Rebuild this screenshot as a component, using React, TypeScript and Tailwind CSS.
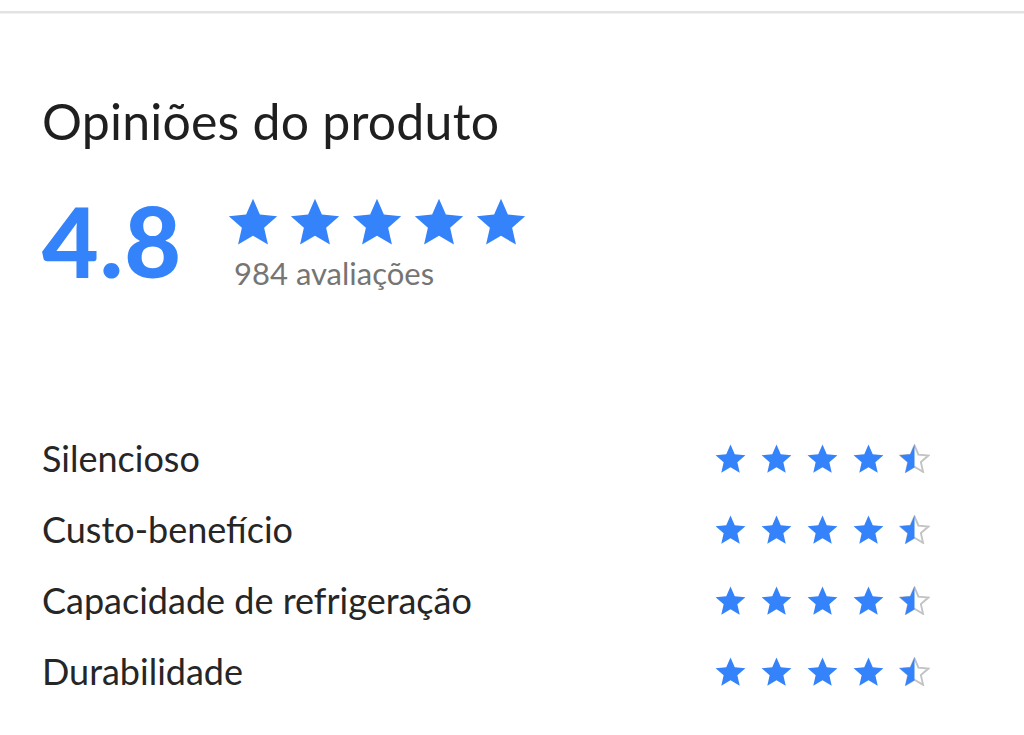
import React from "react";

function starPoints(cx: number, cy: number, R: number, r: number) {
  const pts: string[] = [];
  for (let i = 0; i < 10; i++) {
    const rad = i % 2 === 0 ? R : r;
    const a = (Math.PI / 5) * i - Math.PI / 2;
    pts.push(`${(cx + rad * Math.cos(a)).toFixed(2)},${(cy + rad * Math.sin(a)).toFixed(2)}`);
  }
  return pts.join(" ");
}

const PTS = starPoints(19, 20.5, 20, 9.2);

function Star({ className, half = false, id }: { className: string; half?: boolean; id?: string }) {
  if (!half) {
    return (
      <svg viewBox="-0.5 0 39 37" className={className}>
        <polygon points={PTS} fill="#3483fa" />
      </svg>
    );
  }
  return (
    <svg viewBox="-0.5 0 39 37" className={className}>
      <defs>
        <clipPath id={id}>
          <rect x="-1" y="0" width="20" height="40" />
        </clipPath>
      </defs>
      <polygon
        points={PTS}
        fill="none"
        stroke="#c3c3c3"
        strokeWidth="2.6"
        transform="translate(19 20.5) scale(0.93) translate(-19 -20.5)"
      />
      <polygon points={PTS} fill="#3483fa" clipPath={`url(#${id})`} />
    </svg>
  );
}

const attrs = ["Silencioso", "Custo-benefício", "Capacidade de refrigeração", "Durabilidade"];

export default function App() {
  return (
    <div
      className="w-[1024px] h-[735px] bg-white overflow-hidden"
      style={{ fontFamily: "Lato, 'Open Sans', sans-serif" }}
    >
      <div className="h-[11px] bg-white" />
      <div className="h-[2px] bg-[#e2e2e2]" />
      <div className="h-[1px] bg-[#f1f1f1]" />
      <div className="pl-[42px] pr-[94px]">
        <h1 className="mt-[82px] text-[50px] leading-none font-normal text-[#1f1f1f] tracking-[0.2px]">
          Opiniões do produto
        </h1>
        <div className="mt-[45px] flex items-start">
          <div className="w-[142px] text-[98px] leading-none font-black text-[#3483fa] tracking-[1px]">4.8</div>
          <div className="ml-[44px] flex flex-col">
            <div className="mt-[7px] flex gap-[12px]">
              {[0, 1, 2, 3, 4].map((i) => (
                <Star key={i} className="w-[50px] h-[47px]" />
              ))}
            </div>
            <div className="ml-[6px] mt-[13px] text-[31px] leading-none text-[#757575]">984 avaliações</div>
          </div>
        </div>
        <div className="mt-[151px] flex flex-col gap-[35px]">
          {attrs.map((a, idx) => (
            <div key={a} className="flex items-center justify-between h-[36px]">
              <span className="text-[36px] leading-none text-[#262626]">{a}</span>
              <div className="flex gap-[15px]">
                {[0, 1, 2, 3].map((i) => (
                  <Star key={i} className="w-[31px] h-[29px]" />
                ))}
                <Star half id={`half-${idx}`} className="w-[31px] h-[29px]" />
              </div>
            </div>
          ))}
        </div>
      </div>
    </div>
  );
}
